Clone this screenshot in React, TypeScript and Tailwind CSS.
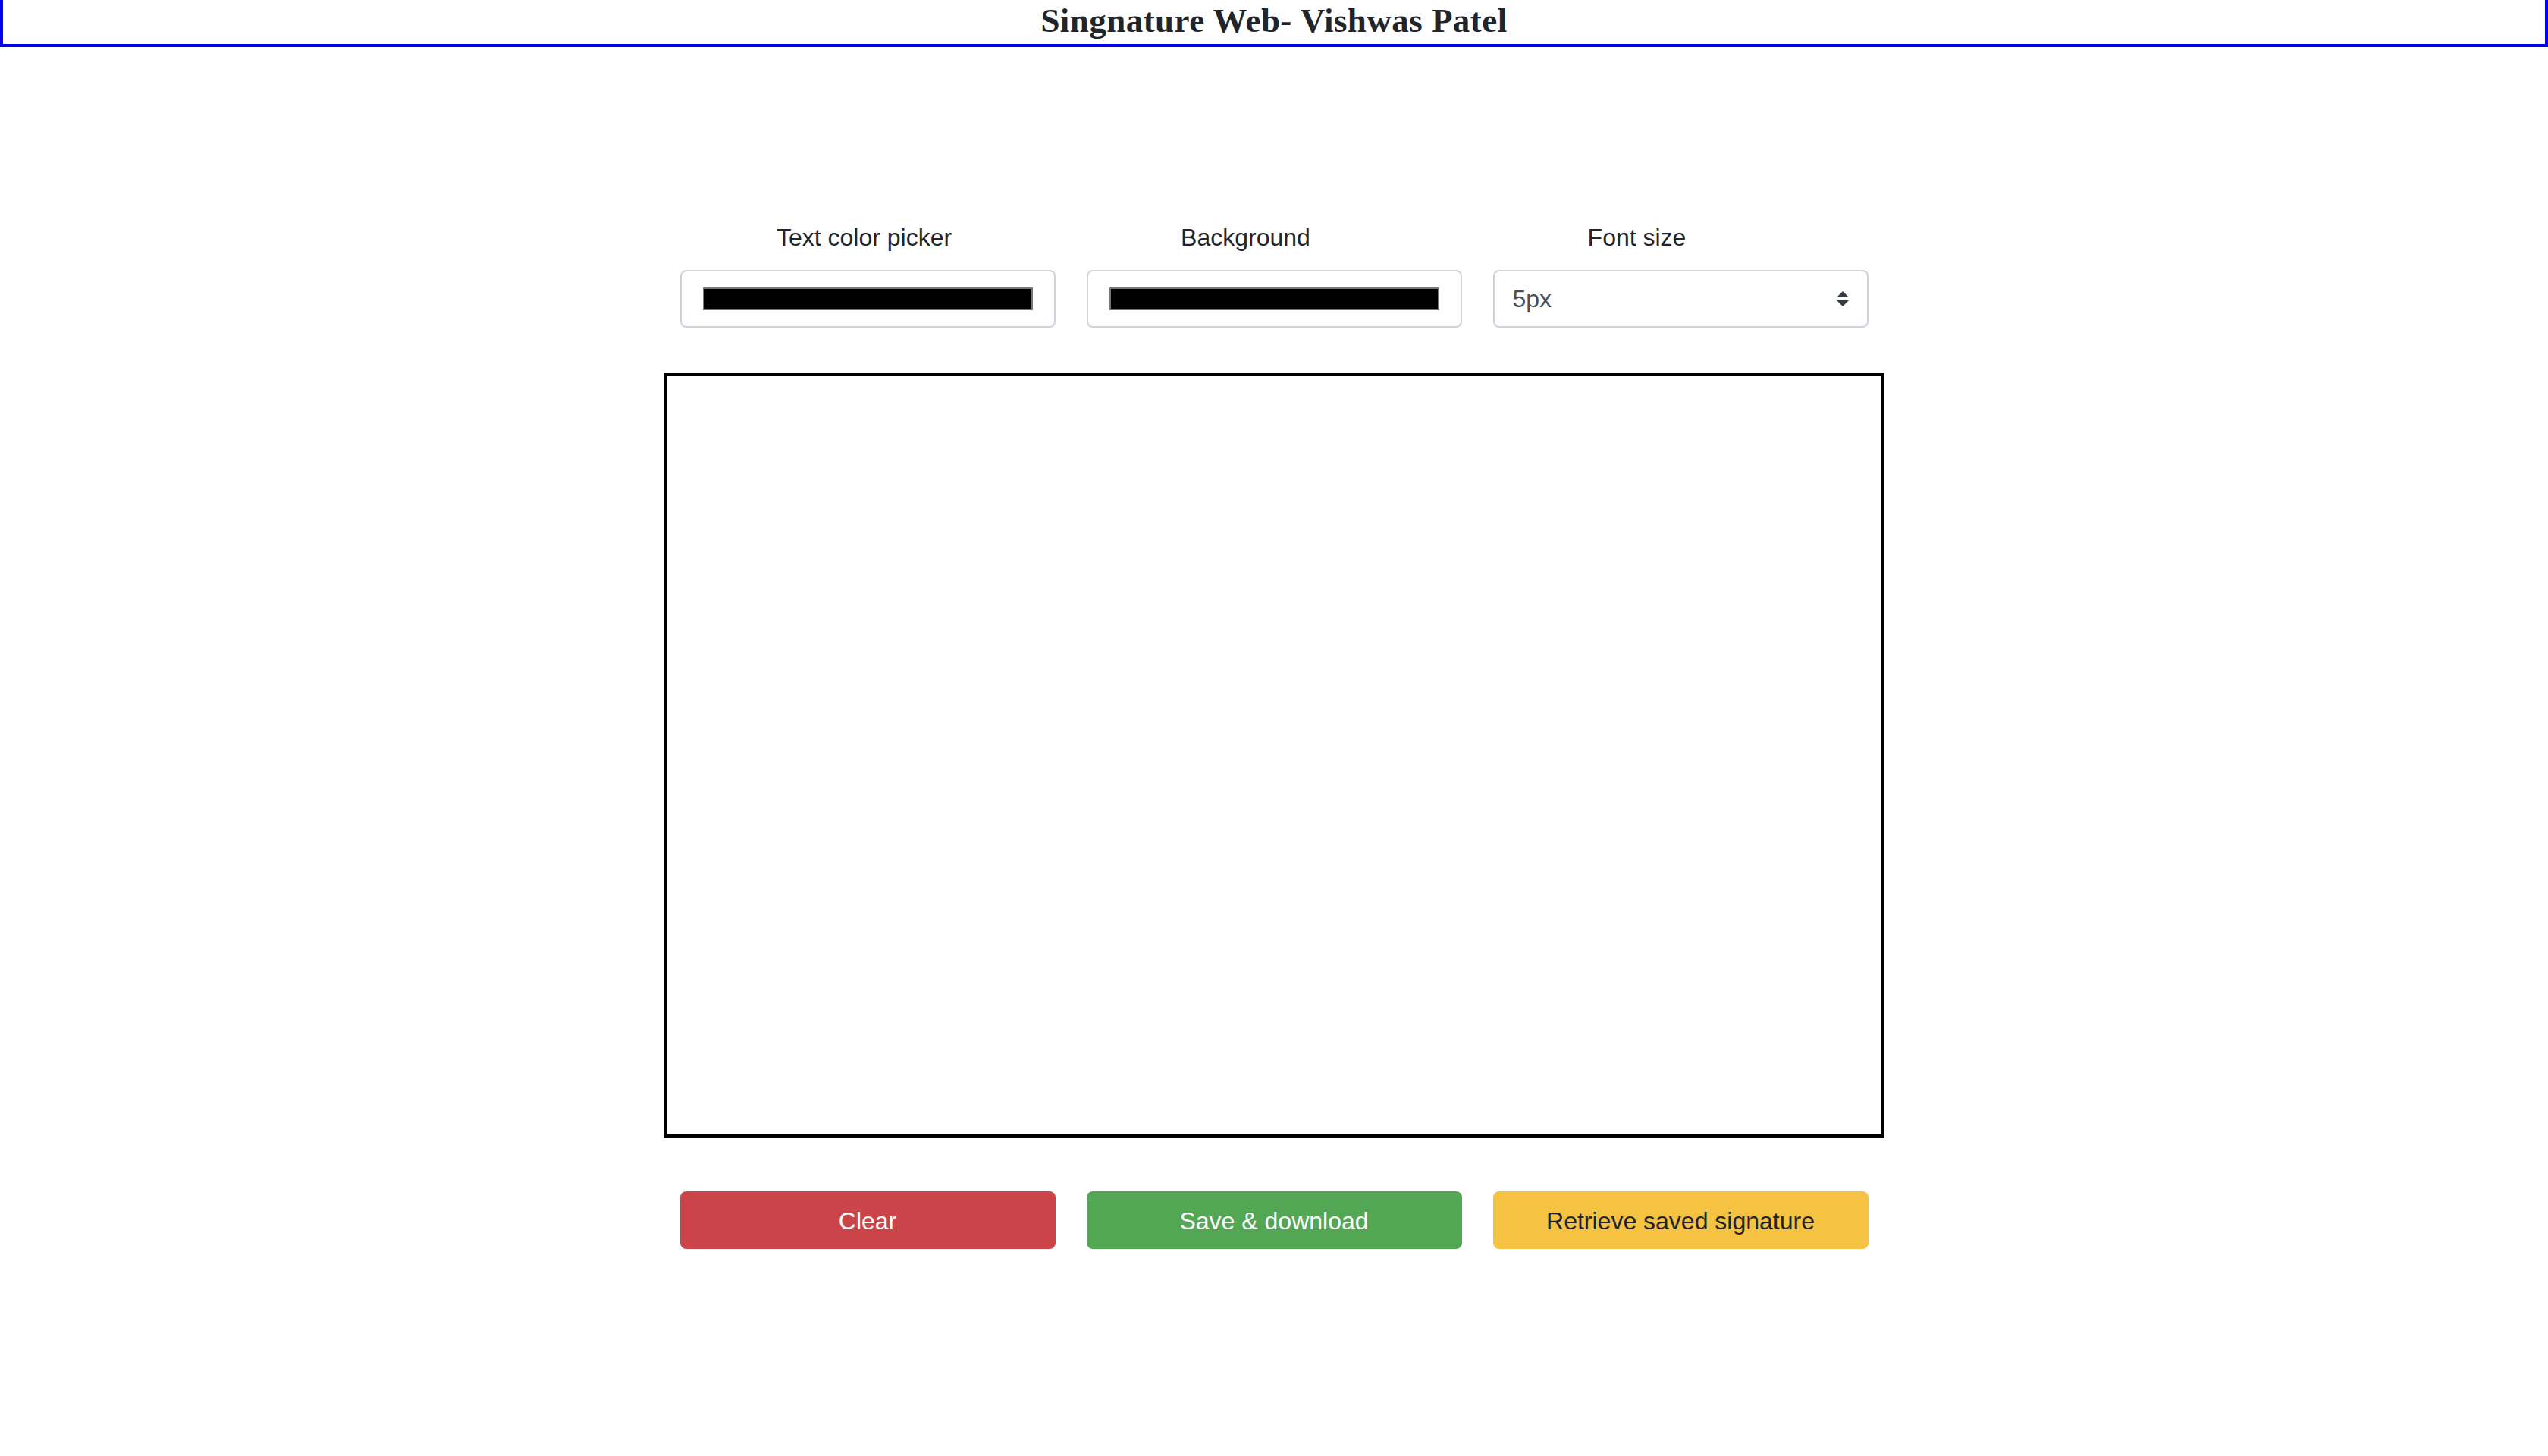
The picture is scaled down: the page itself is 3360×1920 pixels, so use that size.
import React from "react";

function ColorBox() {
  return (
    <div className="h-[76px] rounded-[8px] border-2 border-[#ced4da] bg-white px-[28px] py-[21px]">
      <div className="h-full w-full border-2 border-[#767676] bg-black" />
    </div>
  );
}

export default function App() {
  return (
    <div className="min-h-screen bg-white font-['Liberation_Sans',Arial,sans-serif] text-[#212529]">
      <header className="h-[62px] border-x-4 border-b-4 border-[#0000f5] text-center font-['Liberation_Serif',serif] text-[45px] font-bold leading-[54px] tracking-[0.45px] text-[#212529]">
        Singnature Web- Vishwas Patel
      </header>
      <main className="flex flex-col items-center pt-[227px]">
        <div className="w-[1567px]">
          <div className="-ml-[12px] grid grid-cols-[510px_496px_536px] text-center text-[32px] leading-[48px]">
            <div>Text color picker</div>
            <div>Background</div>
            <div>Font size</div>
          </div>
          <div className="mt-[19px] grid grid-cols-3 gap-[41px]">
            <ColorBox />
            <ColorBox />
            <div className="flex h-[76px] items-center justify-between rounded-[8px] border-2 border-[#ced4da] bg-white pl-[24px] pr-[24px] text-[32px] text-[#495057]">
              <span>5px</span>
              <svg width="16" height="20" viewBox="0 0 4 5">
                <path fill="#343a40" d="M2 0L0 2h4zm0 5L0 3h4z" />
              </svg>
            </div>
          </div>
        </div>
        <div className="mt-[60px] h-[1008px] w-[1608px] border-4 border-black bg-white" />
        <div className="mt-[71px] grid w-[1567px] grid-cols-3 gap-[41px] text-[32px]">
          <button className="h-[76px] rounded-[8px] bg-[#cb444a] pt-[2px] text-white">Clear</button>
          <button className="h-[76px] rounded-[8px] bg-[#53a653] pt-[2px] text-white">Save &amp; download</button>
          <button className="h-[76px] rounded-[8px] bg-[#f5c242] pt-[2px] text-[#212529]">Retrieve saved signature</button>
        </div>
      </main>
    </div>
  );
}
